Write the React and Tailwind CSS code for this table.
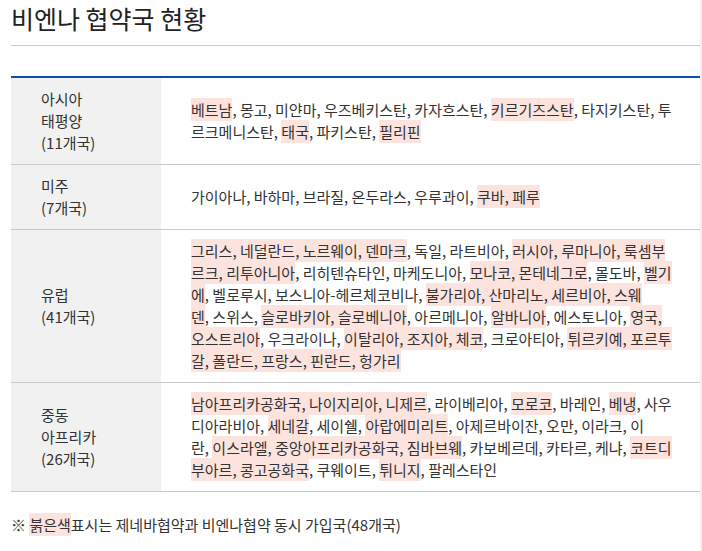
import React from "react";

const H = ({ children }) => <span className="bg-[#fde3de] py-[1px]">{children}</span>;

const rows = [
  {
    head: ["아시아", "태평양", "(11개국)"],
    lines: [
      <><H>베트남</H>, 몽고, 미얀마, 우즈베키스탄, 카자흐스탄, <H>키르기즈스탄</H>, 타지키스탄, 투</>,
      <>르크메니스탄, <H>태국</H>, 파키스탄, <H>필리핀</H></>,
    ],
  },
  {
    head: ["미주", "(7개국)"],
    lines: [<>가이아나, 바하마, 브라질, 온두라스, 우루과이, <H>쿠바, 페루</H></>],
  },
  {
    head: ["유럽", "(41개국)"],
    lines: [
      <><H>그리스, 네덜란드, 노르웨이, 덴마크</H>, 독일, 라트비아, <H>러시아, 루마니아, 룩셈부</H></>,
      <><H>르크, 리투아니아</H>, 리히텐슈타인, 마케도니아, <H>모나코, 몬테네그로</H>, 몰도바, <H>벨기</H></>,
      <><H>에</H>, 벨로루시, 보스니아-헤르체코비나, <H>불가리아, 산마리노, 세르비아, 스웨</H></>,
      <><H>덴</H>, 스위스, <H>슬로바키아, 슬로베니아</H>, 아르메니아, <H>알바니아</H>, 에스토니아, <H>영국,</H></>,
      <><H>오스트리아</H>, 우크라이나, <H>이탈리아, 조지아, 체코</H>, 크로아티아, <H>튀르키예, 포르투</H></>,
      <><H>갈, 폴란드, 프랑스, 핀란드, 헝가리</H></>,
    ],
  },
  {
    head: ["중동", "아프리카", "(26개국)"],
    lines: [
      <><H>남아프리카공화국, 나이지리아, 니제르</H>, 라이베리아, <H>모로코</H>, 바레인, <H>베냉</H>, 사우</>,
      <>디아라비아, <H>세네갈</H>, 세이쉘, <H>아랍에미리트</H>, 아제르바이잔, 오만, 이라크, 이</>,
      <>란, <H>이스라엘, 중앙아프리카공화국, 짐바브웨</H>, 카보베르데, 카타르, 케냐, <H>코트디</H></>,
      <><H>부아르, 콩고공화국</H>, 쿠웨이트, <H>튀니지</H>, 팔레스타인</>,
    ],
  },
];

export default function App() {
  return (
    <div
      className="flex min-h-[551px] bg-white text-[#333] text-[15px] leading-[22px]"
      style={{ fontFamily: '"Noto Sans CJK KR", "Noto Sans", sans-serif' }}
    >
      <div className="flex-1 pl-[11px]">
        <div className="h-[46px] border-b border-[#c9c9c9]">
          <h2 className="text-[25px] leading-[36px] text-[#222] font-normal">비엔나 협약국 현황</h2>
        </div>
        <div className="mt-[30px] border-t-2 border-[#0d4faf]">
          {rows.map((r, i) => (
            <div key={i} className="flex border-b border-[#c9c9c9]">
              <div className="w-[150px] shrink-0 bg-[#f1f1f1] pl-[30px] py-[10px] flex items-center">
                <div>
                  {r.head.map((h, j) => (
                    <div key={j}>{h}</div>
                  ))}
                </div>
              </div>
              <div className="flex-1 pl-[30px] pr-[20px] py-[10px] flex items-center">
                <div>
                  {r.lines.map((l, j) => (
                    <div key={j} className="whitespace-nowrap">{l}</div>
                  ))}
                </div>
              </div>
            </div>
          ))}
        </div>
        <p className="mt-[22px]">
          ※ <H>붉은색</H>표시는 제네바협약과 비엔나협약 동시 가입국(48개국)
        </p>
      </div>
      <div className="w-[2px] shrink-0 bg-[#f0f0f0]" />
    </div>
  );
}
